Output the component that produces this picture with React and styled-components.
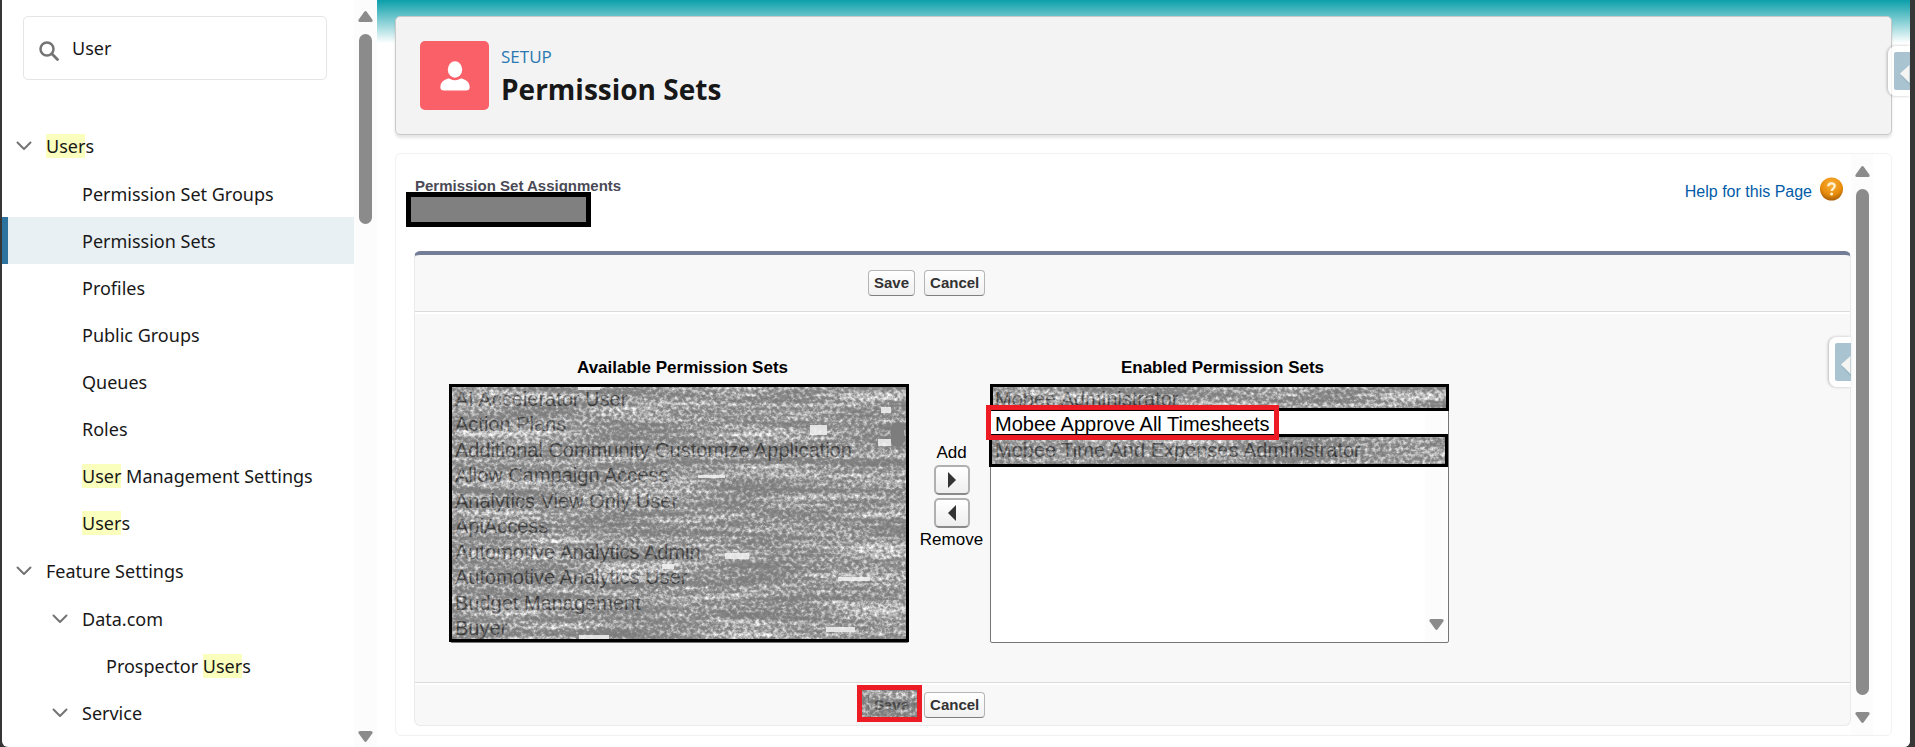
import React, { useId } from "react";
import styled, { createGlobalStyle, css } from "styled-components";

const ui = `"Noto Sans", "Open Sans", sans-serif`;
const heading = `"Open Sans", "Noto Sans", sans-serif`;
const arial = `"Liberation Sans", Arial, sans-serif`;

const GlobalStyle = createGlobalStyle`
  *, *::before, *::after { box-sizing: border-box; }
  body { margin: 0; background: #363636; font-family: ${ui}; color: #181818; }
  button, input, select { margin: 0; font: inherit; color: inherit; }
  ul { list-style: none; margin: 0; padding: 0; }
`;

const Frame = styled.div`
  display: flex;
  height: 100vh;
  min-height: 740px;
  margin: 0 5px 0 2px;
  overflow: hidden;
  background: #fff;
  border-radius: 0 0 6px 6px;
`;

/* ---- scroll rail ---- */
const Rail = styled.div`
  display: flex;
  flex: none;
  flex-direction: column;
  align-items: center;
  width: ${(p) => p.$width}px;
  padding-top: ${(p) => p.$top}px;
  padding-bottom: ${(p) => p.$bottom}px;
  background: #fcfcfc;
`;
const RailBody = styled.div`
  flex: 1;
  width: 13px;
  margin: 12px 0 17px;
`;
const Thumb = styled.div`
  width: 13px;
  height: ${(p) => p.$height};
  border-radius: 7px;
  background: #8b8b8b;
`;
const RailArrow = styled.svg`
  display: block;
  flex: none;
  width: 15px;
  height: 11px;
  fill: #8b8b8b;
  transform: ${(p) => (p.$down ? "rotate(180deg)" : "none")};
`;
const Arrow = ({ down }) => (
  <RailArrow $down={down} viewBox="0 0 15 11" aria-hidden="true">
    <path d="M6.3.7Q7.5-.5 8.7.7L14.3 8.4Q15.4 10.8 13 11H2Q-.4 10.8.7 8.4Z" />
  </RailArrow>
);

/* ---- sidebar ---- */
const Sidebar = styled.aside`
  display: flex;
  flex: none;
  width: 375px;
`;
const SidebarBody = styled.div`
  flex: 1;
  min-width: 0;
  padding-top: 16px;
`;
const SearchBox = styled.label`
  display: flex;
  align-items: center;
  gap: 13px;
  height: 64px;
  margin: 0 27px 42px 21px;
  padding: 0 15px;
  border: 1px solid #e5e5e5;
  border-radius: 5px;
  background: #fff;
`;
const SearchIcon = styled.svg`
  flex: none;
  width: 20px;
  height: 20px;
  margin-top: 6px;
`;
const SearchInput = styled.input`
  flex: 1;
  min-width: 0;
  padding: 0;
  border: 0;
  outline: 0;
  background: none;
  font-size: 18px;
  line-height: 26px;
`;
const Group = styled.ul`
  padding: ${(p) => (p.$outer ? 1 : 0)}px 0;
`;
const NavLink = styled.a`
  display: flex;
  align-items: center;
  height: 47px;
  padding-left: ${(p) => p.$indent}px;
  color: #181818;
  font-size: 18px;
  line-height: 26px;
  text-decoration: none;
  white-space: pre;
  ${(p) =>
    p.$active &&
    css`
      background: #e9f0f4;
      box-shadow: inset 6px 0 #2d739e;
    `}
`;
const Mark = styled.mark`
  background: #faffbd;
  color: inherit;
`;
const Chevron = styled.svg`
  flex: none;
  width: 16px;
  height: 10px;
  margin-right: 14px;
  fill: none;
  stroke: #747474;
  stroke-width: 2;
  stroke-linecap: round;
  stroke-linejoin: round;
`;
const NavItem = ({ label, indent, open, active }) => (
  <NavLink href="#" $indent={indent} $active={active} aria-current={active ? "page" : undefined}>
    {open && (
      <Chevron viewBox="0 0 16 10" aria-hidden="true">
        <path d="M1.500 1.500 8 8l6.500-6.500" />
      </Chevron>
    )}
    <span>
      {label.split(/(User)/).map((part, i) => (part === "User" ? <Mark key={i}>{part}</Mark> : part))}
    </span>
  </NavLink>
);

/* ---- main ---- */
const Main = styled.main`
  position: relative;
  display: flex;
  flex: 1;
  flex-direction: column;
  gap: 18px;
  min-width: 0;
  padding: 16px 18px 11px;
  background: linear-gradient(#0b9faa, #fff 43px);
`;
const PageHeader = styled.header`
  display: flex;
  flex: none;
  align-items: flex-start;
  gap: 12px;
  height: 119px;
  padding: 24px;
  border: 1px solid #c9c9c9;
  border-radius: 5px;
  background: #f3f3f3;
  box-shadow: 0 3px 3px rgba(0, 0, 0, 0.1);
  font-family: ${heading};
`;
const HeaderIcon = styled.svg`
  width: 69px;
  height: 69px;
  border-radius: 5px;
  background: #f96068;
`;
const Eyebrow = styled.div`
  margin-top: 4px;
  color: #2a78b0;
  font-size: 17px;
  line-height: 24px;
`;
const Title = styled.h1`
  margin: 0;
  font-size: 28px;
  font-weight: 700;
  line-height: 40px;
`;
const Card = styled.section`
  display: flex;
  flex: 1;
  min-height: 0;
  padding-right: 18px;
  border: 1px solid #f1f1f1;
  border-radius: 6px;
  background: #fff;
  overflow: hidden;
`;
const Content = styled.div`
  position: relative;
  display: flex;
  flex: 1;
  flex-direction: column;
  min-width: 0;
  padding: 0 0 9px 18px;
  font-family: ${arial};
`;
const TopLine = styled.div`
  position: relative;
  display: flex;
  flex: none;
  justify-content: space-between;
  height: 97px;
  padding: 23px 8px 0 1px;
`;
const Subtitle = styled.h2`
  margin: 0;
  color: #4a4a56;
  font-size: 15px;
  line-height: 18px;
`;
const HelpLink = styled.a`
  display: flex;
  gap: 8px;
  height: 24px;
  color: #015ba7;
  font-size: 16px;
  line-height: 29px;
  text-decoration: none;
`;
const HelpIcon = styled.svg`
  width: 23px;
  height: 24px;
`;
const NameCover = styled.div`
  position: absolute;
  top: 38px;
  left: -8px;
  width: 185px;
  height: 35px;
  border: 5px solid #000;
  background: #808080;
`;
const Panel = styled.form`
  display: flex;
  flex: 1;
  flex-direction: column;
  border: 1px solid #eaeaea;
  border-top: 4px solid #747e96;
  border-radius: 6px;
  background: #f8f8f8;
`;
const Actions = styled.div`
  display: flex;
  flex: none;
  align-items: center;
  gap: 9px;
  height: ${(p) => p.$height}px;
  padding-top: ${(p) => p.$drop || 0}px;
  padding-left: 453px;
`;
const ActionButton = styled.button`
  height: 26px;
  padding: 0 5px;
  border: 1px solid #b5b5b5;
  border-bottom-color: #7f7f7f;
  border-radius: 4px;
  background: linear-gradient(#fff, #f0f0f0);
  color: #333;
  font-size: 15px;
  font-weight: 700;
  line-height: 22px;
`;
const Covered = styled.div`
  position: relative;
  display: flex;
`;
const Picker = styled.div`
  display: flex;
  flex: 1;
  align-items: flex-start;
  padding: 44px 35px 0;
  border: solid #dbdbdb;
  border-width: 1px 0;
  box-shadow: inset 0 2px #fff, 0 2px #fff;
`;
const ListColumn = styled.div`
  width: 459px;
`;
const ListLabel = styled.label`
  display: block;
  height: 29px;
  padding-left: 6px;
  color: #000;
  font-size: 17px;
  font-weight: 700;
  line-height: 24px;
  text-align: center;
`;
const ListFrame = styled.div`
  position: relative;
  height: 258px;
`;
const List = styled.select`
  display: block;
  width: 100%;
  height: 258px;
  padding: 2px 0 0 2px;
  border: 1px solid #767676;
  border-radius: 2px;
  outline: 0;
  overflow: hidden;
  background: #fff;
  color: #000;
  font-size: 20px;
  scrollbar-width: none;
`;
const Option = styled.option`
  height: 25px;
  min-height: 25px;
  padding: 0 2px;
  line-height: 25px;
  &:nth-child(even) {
    height: 26px;
    min-height: 26px;
  }
`;
const ListRail = styled.div`
  position: absolute;
  top: 1px;
  right: 2px;
  bottom: 1px;
  display: flex;
  align-items: flex-end;
  justify-content: center;
  width: 22px;
  padding-bottom: 12px;
  background: #fcfcfc;
`;
const Cover = styled.svg`
  position: absolute;
  top: ${(p) => p.$top}px;
  left: ${(p) => p.$left}px;
  width: ${(p) => p.$width}px;
  height: ${(p) => p.$height}px;
  border: ${(p) => p.$line};
  overflow: hidden;
  pointer-events: none;
`;
const Highlight = styled.div`
  position: absolute;
  top: 20px;
  left: -4px;
  width: 293px;
  height: 35px;
  border: 5px solid #ed1c24;
  pointer-events: none;
`;
const MoveColumn = styled.div`
  display: flex;
  flex-direction: column;
  align-items: center;
  gap: 3px;
  width: 81px;
  padding: 88px 0 0 4px;
  color: #000;
  font-size: 17px;
  line-height: 18px;
`;
const MoveButton = styled.button`
  display: flex;
  align-items: center;
  justify-content: center;
  width: 36px;
  height: 30px;
  padding: 0;
  border: 2px solid #b0b0b0;
  border-bottom-color: #8a8a8a;
  border-radius: 5px;
  background: linear-gradient(#fff, #eee);
`;
const MoveIcon = styled.svg`
  width: 8px;
  height: 16px;
  fill: #333;
`;
const SideTab = styled.button`
  position: absolute;
  top: ${(p) => p.$top}px;
  right: 0;
  width: 22px;
  height: 50px;
  padding: 6px 0 6px 6px;
  border: 0;
  border-radius: 8px 0 0 8px;
  background: rgba(255, 255, 255, 0.8);
  box-shadow: -1px 0 3px rgba(0, 0, 0, 0.25);
`;
const TabIcon = styled.svg`
  display: block;
  width: 16px;
  height: 38px;
  border-radius: 2px 0 0 2px;
  background: #a9c4d0;
`;

const Tab = ({ top }) => (
  <SideTab type="button" $top={top} aria-label="Open panel">
    <TabIcon viewBox="0 0 16 38">
      <path d="M7 24 16 34V15Z" fill="#8fadba" opacity=".6" />
      <path d="M6 21.500 15.500 13v18Z" fill="#f4f4f2" />
    </TabIcon>
  </SideTab>
);

/* Grainy grey film laid over entries that are to stay unreadable. */
const film = ".29 .29 .29 .29 .31 .39 .6 .8 1 1 1";
const Grain = ({ top, left, width, height, line, seed = 3, flecks = [] }) => {
  const id = useId();
  return (
    <Cover $top={top} $left={left} $width={width} $height={height} $line={line} aria-hidden="true">
      <filter id={id} x="0" y="0" width="100%" height="100%" colorInterpolationFilters="sRGB">
        <feTurbulence type="fractalNoise" baseFrequency="0.008 0.14" numOctaves="2" seed={seed} />
        <feColorMatrix values="1 0 0 0 0 1 0 0 0 0 1 0 0 0 0 0 0 0 0 1" result="streaks" />
        <feTurbulence type="fractalNoise" baseFrequency="0.26 0.3" numOctaves="3" seed={seed + 4} />
        <feColorMatrix values="1 0 0 0 0 1 0 0 0 0 1 0 0 0 0 0 0 0 0 1" result="grain" />
        <feComposite in="streaks" in2="grain" operator="arithmetic" k2="0.45" k3="0.6" />
        <feComponentTransfer>
          <feFuncR type="table" tableValues={film} />
          <feFuncG type="table" tableValues={film} />
          <feFuncB type="table" tableValues={film} />
        </feComponentTransfer>
      </filter>
      <rect width="100%" height="100%" filter={`url(#${id})`} opacity=".72" />
      {flecks.map(([x, y, w, h]) => (
        <rect key={`${x}-${y}`} x={x} y={y} width={w} height={h} fill="#f2f2f2" opacity=".85" />
      ))}
      {flecks.length > 0 && <rect x="439" y="35" width="13" height="25" rx="6" fill="#7d7d7d" />}
    </Cover>
  );
};

const available = [
  "AI Accelerator User",
  "Action Plans",
  "Additional Community Customize Application",
  "Allow Campaign Access",
  "Analytics View Only User",
  "ApiAccess",
  "Automotive Analytics Admin",
  "Automotive Analytics User",
  "Budget Management",
  "Buyer",
];
const enabled = ["Mobee Administrator", "Mobee Approve All Timesheets", "Mobee Time And Expenses Administrator"];
const userPages = [
  "Permission Set Groups",
  "Permission Sets",
  "Profiles",
  "Public Groups",
  "Queues",
  "Roles",
  "User Management Settings",
  "Users",
];
const flecks = [
  [358, 38, 17, 10],
  [429, 20, 10, 6],
  [426, 52, 13, 7],
  [246, 88, 27, 3],
  [273, 166, 24, 6],
  [210, 177, 12, 5],
  [386, 190, 32, 4],
  [127, 248, 30, 5],
  [374, 240, 29, 5],
  [126, 0, 22, 3],
];

export default function App() {
  return (
    <>
      <GlobalStyle />
      <Frame>
        <Sidebar>
          <SidebarBody>
            <SearchBox>
              <SearchIcon viewBox="0 0 20 20" fill="none" stroke="#747474" aria-hidden="true">
                <circle cx="8" cy="8" r="6.500" strokeWidth="2.500" />
                <path d="m12.800 12.800 5.700 5.700" strokeWidth="2.800" strokeLinecap="round" />
              </SearchIcon>
              <SearchInput type="text" defaultValue="User" aria-label="Quick Find" />
            </SearchBox>
            <nav>
              <NavItem label="Users" indent={14} open />
              <Group $outer>
                {userPages.map((p) => (
                  <li key={p}>
                    <NavItem label={p} indent={80} active={p === "Permission Sets"} />
                  </li>
                ))}
              </Group>
              <NavItem label="Feature Settings" indent={14} open />
              <Group $outer>
                <li>
                  <NavItem label="Data.com" indent={50} open />
                  <Group>
                    <li>
                      <NavItem label="Prospector Users" indent={104} />
                    </li>
                  </Group>
                </li>
                <li>
                  <NavItem label="Service" indent={50} open />
                </li>
              </Group>
            </nav>
          </SidebarBody>
          <Rail $width={23} $top={11} $bottom={5}>
            <Arrow />
            <RailBody>
              <Thumb $height="190px" />
            </RailBody>
            <Arrow down />
          </Rail>
        </Sidebar>
        <Main>
          <PageHeader>
            <HeaderIcon viewBox="0 0 69 69" aria-hidden="true">
              <ellipse cx="35" cy="28.500" rx="7.200" ry="8.300" fill="#fff" />
              <path
                d="M28 37.600q1.300-.4 2.300.4 4.700 2.600 9.400 0 1-.8 2.300-.4 7.700 2.400 7.700 8.400 0 3.500-3.700 3.500H24q-3.700 0-3.700-3.500 0-6 7.700-8.400Z"
                fill="#fff"
              />
            </HeaderIcon>
            <div>
              <Eyebrow>SETUP</Eyebrow>
              <Title>Permission Sets</Title>
            </div>
          </PageHeader>
          <Card>
            <Content>
              <TopLine>
                <Subtitle>Permission Set Assignments</Subtitle>
                <HelpLink href="#">
                  Help for this Page
                  <HelpIcon viewBox="0 0 23 24" aria-hidden="true">
                    <defs>
                      <radialGradient id="help" cx=".5" cy=".3" r=".7">
                        <stop offset="0" stopColor="#f9b13a" />
                        <stop offset=".65" stopColor="#e98c0a" />
                        <stop offset="1" stopColor="#a85f08" />
                      </radialGradient>
                    </defs>
                    <circle cx="11.500" cy="12" r="11.500" fill="url(#help)" />
                    <path
                      d="M8.300 9.300c.2-4 6.600-3.800 6.400 0-.1 2.300-3 2.300-3 4.700"
                      fill="none"
                      stroke="#fff3d6"
                      strokeWidth="2.300"
                    />
                    <circle cx="11.600" cy="17" r="1.500" fill="#fff3d6" />
                  </HelpIcon>
                </HelpLink>
                <NameCover />
              </TopLine>
              <Panel onSubmit={(e) => e.preventDefault()}>
                <Actions $height={56}>
                  <ActionButton type="submit">Save</ActionButton>
                  <ActionButton type="button">Cancel</ActionButton>
                </Actions>
                <Picker>
                  <ListColumn>
                    <ListLabel htmlFor="available">Available Permission Sets</ListLabel>
                    <ListFrame>
                      <List id="available" multiple size={10}>
                        {available.map((o) => (
                          <Option key={o}>{o}</Option>
                        ))}
                      </List>
                      <Grain top={-1} left={-1} width={460} height={258} line="3px solid #000" flecks={flecks} />
                    </ListFrame>
                  </ListColumn>
                  <MoveColumn>
                    <span>Add</span>
                    <MoveButton type="button" aria-label="Add">
                      <MoveIcon viewBox="0 0 8 16">
                        <path d="M0 0 8 8 0 16Z" />
                      </MoveIcon>
                    </MoveButton>
                    <MoveButton type="button" aria-label="Remove">
                      <MoveIcon viewBox="0 0 8 16">
                        <path d="M8 0 0 8 8 16Z" />
                      </MoveIcon>
                    </MoveButton>
                    <span>Remove</span>
                  </MoveColumn>
                  <ListColumn>
                    <ListLabel htmlFor="enabled">Enabled Permission Sets</ListLabel>
                    <ListFrame>
                      <List id="enabled" multiple size={10}>
                        {enabled.map((o) => (
                          <Option key={o}>{o}</Option>
                        ))}
                      </List>
                      <ListRail>
                        <Arrow down />
                      </ListRail>
                      <Grain top={-1} left={0} width={459} height={27} line="3px solid #000" />
                      <Grain top={49} left={-1} width={459} height={33} line="3px solid #000" seed={8} />
                      <Highlight />
                    </ListFrame>
                  </ListColumn>
                </Picker>
                <Actions $height={42} $drop={2}>
                  <Covered>
                    <ActionButton type="submit">Save</ActionButton>
                    <Grain top={-7} left={-11} width={65} height={37} line="5px solid #ed1c24" seed={12} />
                  </Covered>
                  <ActionButton type="button">Cancel</ActionButton>
                </Actions>
              </Panel>
              <Tab top={183} />
            </Content>
            <Rail $width={22} $top={12} $bottom={12}>
              <Arrow />
              <RailBody>
                <Thumb $height="100%" />
              </RailBody>
              <Arrow down />
            </Rail>
          </Card>
          <Tab top={46} />
        </Main>
      </Frame>
    </>
  );
}
